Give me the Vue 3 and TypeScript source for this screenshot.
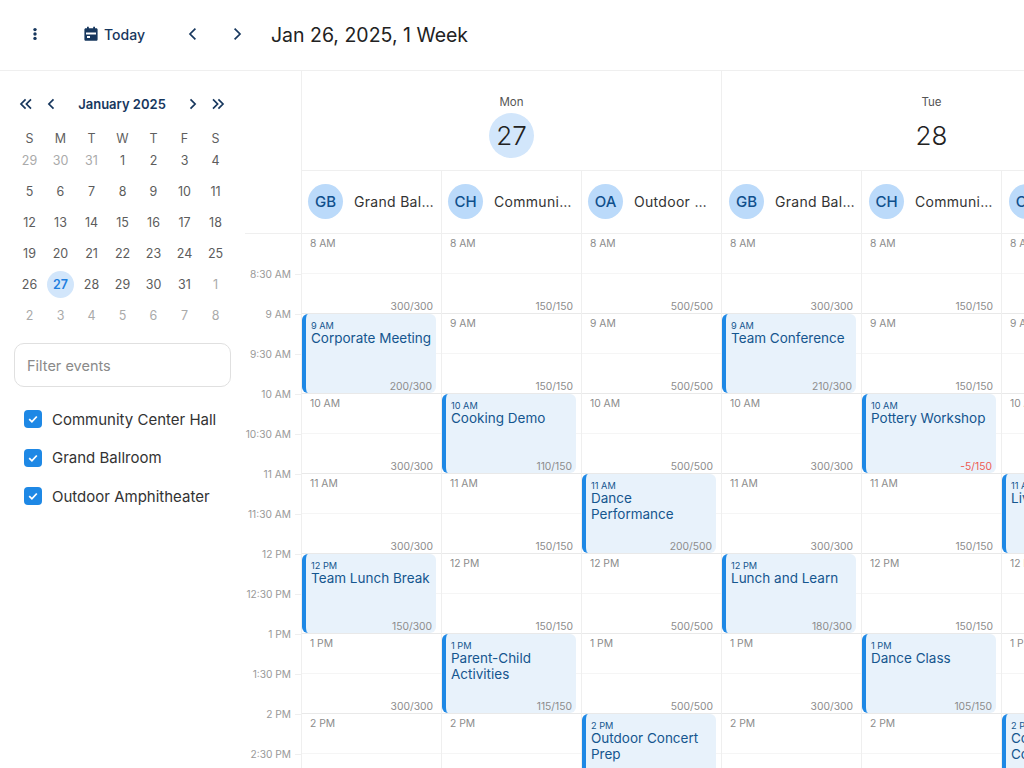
<script setup lang="ts">
interface CalEvent {
  hour: number
  title: string
  left: string
}

interface Resource {
  initials: string
  name: string
  capacity: number
  events: CalEvent[]
}

interface Day {
  label: string
  date: number
  selected?: boolean
  resources: Resource[]
}

const weekdays = ['S', 'M', 'T', 'W', 'T', 'F', 'S']

const monthDays = [
  ['29', '30', '31', '1', '2', '3', '4'],
  ['5', '6', '7', '8', '9', '10', '11'],
  ['12', '13', '14', '15', '16', '17', '18'],
  ['19', '20', '21', '22', '23', '24', '25'],
  ['26', '27', '28', '29', '30', '31', '1'],
  ['2', '3', '4', '5', '6', '7', '8']
]

const isOutside = (row: number, col: number) =>
  (row === 0 && col < 3) || (row === 4 && col === 6) || row === 5

const rooms = ['Community Center Hall', 'Grand Ballroom', 'Outdoor Amphitheater']

const days: Day[] = [
  {
    label: 'Mon',
    date: 27,
    selected: true,
    resources: [
      {
        initials: 'GB',
        name: 'Grand Ballroom',
        capacity: 300,
        events: [
          { hour: 9, title: 'Corporate Meeting', left: '200/300' },
          { hour: 12, title: 'Team Lunch Break', left: '150/300' }
        ]
      },
      {
        initials: 'CH',
        name: 'Community Center Hall',
        capacity: 150,
        events: [
          { hour: 10, title: 'Cooking Demo', left: '110/150' },
          { hour: 13, title: 'Parent-Child Activities', left: '115/150' }
        ]
      },
      {
        initials: 'OA',
        name: 'Outdoor Amphitheater',
        capacity: 500,
        events: [
          { hour: 11, title: 'Dance Performance', left: '200/500' },
          { hour: 14, title: 'Outdoor Concert Prep', left: '300/500' }
        ]
      }
    ]
  },
  {
    label: 'Tue',
    date: 28,
    resources: [
      {
        initials: 'GB',
        name: 'Grand Ballroom',
        capacity: 300,
        events: [
          { hour: 9, title: 'Team Conference', left: '210/300' },
          { hour: 12, title: 'Lunch and Learn', left: '180/300' }
        ]
      },
      {
        initials: 'CH',
        name: 'Community Center Hall',
        capacity: 150,
        events: [
          { hour: 10, title: 'Pottery Workshop', left: '-5/150' },
          { hour: 13, title: 'Dance Class', left: '105/150' }
        ]
      },
      {
        initials: 'OA',
        name: 'Outdoor Amphitheater',
        capacity: 500,
        events: [
          { hour: 11, title: 'Live Music', left: '250/500' },
          { hour: 14, title: 'Community Concert', left: '400/500' }
        ]
      }
    ]
  }
]

const hours = [8, 9, 10, 11, 12, 13, 14]

const hourLabel = (h: number) => {
  if (h === 12) return '12 PM'
  return h > 12 ? `${h - 12} PM` : `${h} AM`
}

const gutterLabels = hours.flatMap((h) => {
  const base = hourLabel(h)
  const half = base.replace(' ', ':30 ')
  return h === 8 ? [half] : [base, half]
})

const eventAt = (res: Resource, h: number) => res.events.find((e) => e.hour === h)
const isNegative = (text: string) => text.startsWith('-')
</script>

<template>
  <div class="app">
    <header class="topbar">
      <button type="button" class="icon-btn menu-btn" aria-label="Menu">
        <svg width="20" height="20" viewBox="0 0 20 20">
          <circle cx="10" cy="5.6" r="1.7" />
          <circle cx="10" cy="10" r="1.7" />
          <circle cx="10" cy="14.4" r="1.7" />
        </svg>
      </button>
      <button type="button" class="today-btn">
        <svg width="16" height="16" viewBox="0 0 16 16">
          <path
            fill-rule="evenodd"
            d="M4 .8h1.8v1.4h4.4V.8H12v1.4h1.2c.8 0 1.4.6 1.4 1.4v9.8c0 .8-.6 1.4-1.4 1.4H2.8c-.8 0-1.4-.6-1.4-1.4V3.6c0-.8.6-1.4 1.4-1.4H4V.8zM3 6.4v2.2h10V6.4H3zm1 3.6v2h3v-2H4z"
          />
        </svg>
        <span>Today</span>
      </button>
      <button type="button" class="icon-btn prev-btn" aria-label="Previous">
        <svg width="16" height="16" viewBox="0 0 16 16"><path d="M10.4 2.6 5 8l5.4 5.4" /></svg>
      </button>
      <button type="button" class="icon-btn next-btn" aria-label="Next">
        <svg width="16" height="16" viewBox="0 0 16 16"><path d="M5.6 2.6 11 8l-5.4 5.4" /></svg>
      </button>
      <h1 class="range-title">Jan 26, 2025, 1 Week</h1>
    </header>

    <div class="main">
      <aside class="sidebar">
        <div class="month-nav">
          <svg class="nav-icon" width="14" height="14" viewBox="0 0 14 14"><path d="M6.6 2.4 2 7l4.6 4.6M12 2.4 7.4 7l4.6 4.6" /></svg>
          <svg class="nav-icon" width="14" height="14" viewBox="0 0 14 14"><path d="M9.5 2.4 4.9 7l4.6 4.6" /></svg>
          <span class="month-title">January 2025</span>
          <svg class="nav-icon" width="14" height="14" viewBox="0 0 14 14"><path d="M4.5 2.4 9.1 7l-4.6 4.6" /></svg>
          <svg class="nav-icon" width="14" height="14" viewBox="0 0 14 14"><path d="M2 2.4 6.6 7 2 11.6M7.4 2.4 12 7l-4.6 4.6" /></svg>
        </div>

        <div class="month-grid">
          <span v-for="(w, i) in weekdays" :key="i" class="weekday">{{ w }}</span>
          <template v-for="(row, r) in monthDays" :key="r">
            <span
              v-for="(d, c) in row"
              :key="c"
              class="month-day"
              :class="{ outside: isOutside(r, c), selected: r === 4 && c === 1 }"
            >
              <span class="month-day-num">{{ d }}</span>
            </span>
          </template>
        </div>

        <input class="filter-input" type="text" placeholder="Filter events" />

        <ul class="room-list">
          <li v-for="room in rooms" :key="room" class="room-item">
            <span class="check">
              <svg width="12" height="12" viewBox="0 0 12 12"><path d="M2.2 6.2 4.9 8.8 9.8 3.5" /></svg>
            </span>
            <span>{{ room }}</span>
          </li>
        </ul>
      </aside>

      <section class="board">
        <div class="board-head">
          <div class="day-head" v-for="day in days" :key="day.label">
            <div class="day-title">
              <span class="day-label">{{ day.label }}</span>
              <span class="day-date" :class="{ selected: day.selected }">{{ day.date }}</span>
            </div>
            <div class="res-row">
              <div v-for="res in day.resources" :key="res.initials" class="res-head">
                <span class="avatar">{{ res.initials }}</span>
                <span class="res-name">{{ res.name }}</span>
              </div>
            </div>
          </div>
        </div>

        <div class="board-body">
          <div class="gutter">
            <div v-for="t in gutterLabels" :key="t" class="gutter-slot">
              <span>{{ t }}</span>
              <i class="tick"></i>
            </div>
          </div>
          <template v-for="day in days" :key="day.label">
            <div v-for="res in day.resources" :key="res.initials" class="col">
              <div v-for="h in hours" :key="h" class="cell">
                <div class="half">
                  <span v-if="!eventAt(res, h)" class="cell-hour">{{ hourLabel(h) }}</span>
                </div>
                <div class="half last">
                  <span v-if="!eventAt(res, h)" class="cell-count">{{ res.capacity }}/{{ res.capacity }}</span>
                </div>
                <div v-if="eventAt(res, h)" class="event">
                  <span class="event-time">{{ hourLabel(h) }}</span>
                  <span class="event-title">{{ eventAt(res, h)?.title }}</span>
                  <span
                    class="event-count"
                    :class="{ negative: isNegative(eventAt(res, h)?.left ?? '') }"
                  >{{ eventAt(res, h)?.left }}</span>
                </div>
              </div>
            </div>
          </template>
        </div>
      </section>
    </div>
  </div>
</template>

<style scoped>
.app {
  height: 768px;
  display: flex;
  flex-direction: column;
  overflow: hidden;
  font-family: Inter, "Noto Sans", sans-serif;
  color: #2b2b2b;
  background: #fff;
}

button {
  border: none;
  background: none;
  padding: 0;
  font: inherit;
  cursor: pointer;
}

.topbar {
  flex: 0 0 71px;
  box-sizing: border-box;
  display: flex;
  align-items: center;
  border-bottom: 1px solid #efefef;
}

.icon-btn {
  display: flex;
  align-items: center;
  justify-content: center;
}

.icon-btn svg {
  fill: #17375e;
}

.icon-btn path {
  fill: none;
  stroke: #17375e;
  stroke-width: 1.7;
}

.menu-btn {
  margin: -2px 0 0 25px;
}

.today-btn {
  display: flex;
  align-items: center;
  gap: 5px;
  margin: -2px 0 0 38px;
  color: #17375e;
  font-size: 14px;
  font-weight: 500;
}

.today-btn svg {
  fill: #17375e;
}

.prev-btn {
  margin: -2px 0 0 40px;
}

.next-btn {
  margin: -2px 0 0 28px;
}

.range-title {
  margin: -1px 0 0 26px;
  font-size: 19.5px;
  font-weight: 400;
  color: #222;
}

.main {
  flex: 1;
  min-height: 0;
  display: flex;
}

.sidebar {
  flex: 0 0 245px;
  box-sizing: border-box;
  padding: 24px 14px 0;
}

.month-nav {
  width: 211px;
  height: 18px;
  display: flex;
  align-items: center;
  box-sizing: border-box;
  padding-left: 5px;
}

.nav-icon {
  flex: none;
}

.nav-icon path {
  fill: none;
  stroke: #17375e;
  stroke-width: 1.7;
}

.nav-icon:nth-child(2) {
  margin-left: 11px;
}

.nav-icon:nth-child(4) {
  margin-right: 11px;
}

.month-title {
  width: 114px;
  margin: 0 auto;
  font-size: 13px;
  font-weight: 600;
  color: #17375e;
  text-align: center;
}

.month-grid {
  display: grid;
  grid-template-columns: repeat(7, 31px);
  margin: 19px 0 0;
  justify-content: center;
  font-size: 12.5px;
}

.weekday {
  height: 13px;
  line-height: 13px;
  text-align: center;
  color: #5f5f5f;
}

.month-day {
  height: 31px;
  display: flex;
  align-items: center;
  justify-content: center;
  color: #5c5c5c;
}

.month-day.outside {
  color: #aaa;
}

.month-day-num {
  width: 27px;
  height: 27px;
  display: flex;
  align-items: center;
  justify-content: center;
  border-radius: 50%;
}

.month-day.selected .month-day-num {
  background: #d2e6fb;
  color: #1e7fe0;
  font-weight: 600;
}

.filter-input {
  display: block;
  width: 217px;
  height: 44px;
  box-sizing: border-box;
  margin-top: 12px;
  padding: 0 12px;
  border: 1px solid #e0e0e0;
  border-radius: 10px;
  outline: none;
  font: inherit;
  font-size: 14.5px;
  color: #333;
}

.filter-input::placeholder {
  color: #8a8a8a;
}

.room-list {
  list-style: none;
  margin: 13px 0 0;
  padding: 0 0 0 10px;
}

.room-item {
  height: 38.5px;
  display: flex;
  align-items: center;
  gap: 10px;
  font-size: 15px;
  color: #333;
}

.check {
  width: 18px;
  height: 18px;
  flex: none;
  display: flex;
  align-items: center;
  justify-content: center;
  border-radius: 4px;
  background: #1e88e5;
}

.check path {
  fill: none;
  stroke: #fff;
  stroke-width: 1.8;
}

.board {
  flex: 1;
  min-width: 0;
  overflow: hidden;
}

.board-head {
  display: flex;
  padding-left: 56px;
  width: max-content;
}

.day-head {
  flex: none;
  width: 421px;
  box-sizing: border-box;
  border-left: 1px solid #efefef;
}

.day-head + .day-head {
  margin-left: -1px;
}

.day-head + .day-head .res-head {
  padding: 0 6px 1px 7px;
}

.day-title {
  height: 100px;
  box-sizing: border-box;
  display: flex;
  flex-direction: column;
  align-items: center;
  padding: 24px 1px 0 0;
  border-bottom: 1px solid #efefef;
}

.day-label {
  font-size: 11.5px;
  line-height: 14px;
  color: #555;
}

.day-date {
  width: 45px;
  height: 45px;
  margin-top: 4px;
  display: flex;
  align-items: center;
  justify-content: center;
  border-radius: 50%;
  font-size: 26px;
  font-weight: 300;
  color: #222;
}

.day-date.selected {
  background: #d2e6fb;
}

.res-row {
  display: flex;
  height: 62px;
  box-sizing: border-box;
}

.res-head {
  width: 140px;
  box-sizing: border-box;
  display: flex;
  align-items: center;
  gap: 11px;
  padding: 0 7px 1px 6px;
  border-right: 1px solid #efefef;
}

.avatar {
  flex: none;
  width: 35px;
  height: 35px;
  display: flex;
  align-items: center;
  justify-content: center;
  border-radius: 50%;
  background: #bbdafa;
  color: #0f4f8c;
  font-size: 15px;
  font-weight: 500;
}

.res-name {
  min-width: 0;
  overflow: hidden;
  white-space: nowrap;
  text-overflow: ellipsis;
  font-size: 14px;
  letter-spacing: 0.3px;
  color: #333;
}

.board-body {
  display: flex;
  width: max-content;
  border-top: 1px solid #efefef;
}

.gutter {
  flex: none;
  width: 57px;
  box-sizing: border-box;
  padding-top: 20px;
  border-right: 1px solid #efefef;
}

.gutter-slot {
  height: 40px;
  display: flex;
  align-items: center;
  justify-content: flex-end;
  gap: 4px;
  font-size: 10.2px;
  color: #999;
  white-space: nowrap;
}

.tick {
  width: 6px;
  height: 1px;
  background: #efefef;
}

.col {
  flex: none;
  width: 140px;
  box-sizing: border-box;
  border-right: 1px solid #efefef;
}

.cell {
  position: relative;
  height: 80px;
}

.half {
  height: 40px;
  box-sizing: border-box;
  border-bottom: 1px solid #f5f5f5;
  font-size: 10.3px;
  color: #8c8c8c;
}

.half.last {
  display: flex;
  align-items: flex-end;
  justify-content: flex-end;
  padding: 0 8px 1px 0;
  border-bottom-color: #e9e9e9;
}

.cell-hour {
  display: block;
  padding: 3px 0 0 8px;
}

.event {
  position: absolute;
  top: 0;
  left: 0;
  width: 134px;
  height: 79px;
  box-sizing: border-box;
  display: flex;
  flex-direction: column;
  padding: 6px 4px 0 5px;
  border-left: 4px solid #1e88e5;
  border-radius: 6px;
  background: #e8f2fb;
  color: #15568f;
}

.event-time {
  font-size: 9.2px;
  line-height: 11px;
}

.event-title {
  font-size: 13.5px;
  line-height: 15.5px;
}

.event-count {
  position: absolute;
  right: 4px;
  bottom: 1px;
  font-size: 10.3px;
  color: #8c8c8c;
}

.event-count.negative {
  color: #ee5a52;
}
</style>

<style>
html,
body {
  margin: 0;
  background: #fff;
}
</style>
